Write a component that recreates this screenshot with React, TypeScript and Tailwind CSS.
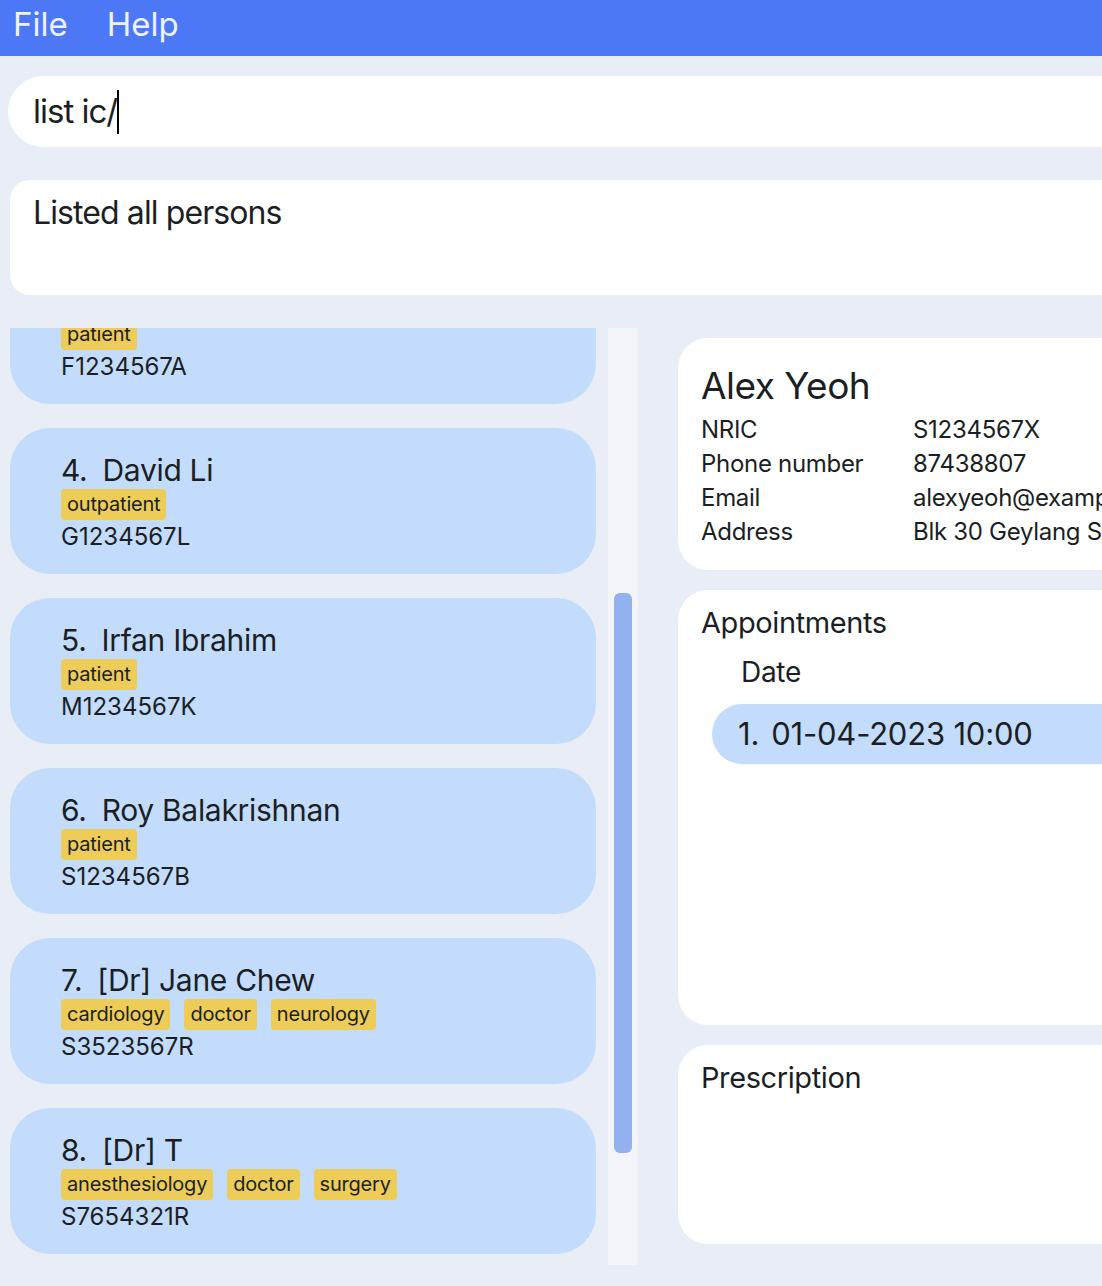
import React from "react";

const people = [
  { n: 1, name: "Alex Yeoh", tags: ["patient"], id: "S1234567X" },
  { n: 2, name: "Bernice Yu", tags: ["patient"], id: "T1234567B" },
  { n: 3, name: "Charlotte Oliveiro", tags: ["patient"], id: "F1234567A" },
  { n: 4, name: "David Li", tags: ["outpatient"], id: "G1234567L" },
  { n: 5, name: "Irfan Ibrahim", tags: ["patient"], id: "M1234567K" },
  { n: 6, name: "Roy Balakrishnan", tags: ["patient"], id: "S1234567B" },
  { n: 7, name: "[Dr] Jane Chew", tags: ["cardiology", "doctor", "neurology"], id: "S3523567R" },
  { n: 8, name: "[Dr] T", tags: ["anesthesiology", "doctor", "surgery"], id: "S7654321R" },
];

function Card({ p }: { p: (typeof people)[number] }) {
  return (
    <div className="h-[146px] shrink-0 rounded-[40px] bg-[#c3dcfc] pl-[51px] pt-[22px] text-[#1b1f24]">
      <div className="flex gap-[15px] text-[30px] leading-[40px] tracking-[-0.3px]">
        <span>{p.n}.</span>
        <span>{p.name}</span>
      </div>
      <div className="mt-[-1px] flex gap-[14px]">
        {p.tags.map((t) => (
          <span key={t} className="rounded-[4px] bg-[#edcc57] px-[6px] text-[20px] leading-[31px] tracking-[-0.2px]">
            {t}
          </span>
        ))}
      </div>
      <div className="mt-[2px] text-[24px] leading-[30px]">{p.id}</div>
    </div>
  );
}

export default function App() {
  return (
    <div
      className="relative h-[1286px] w-[1102px] overflow-hidden bg-[#e8edf6] text-[#1b1f24]"
      style={{ fontFamily: "Inter, 'Noto Sans', sans-serif" }}
    >
      <div className="flex h-[56px] items-start gap-[39px] bg-[#4d78f5] pl-[13px] pt-[2px] text-[33px] leading-[44px] text-[#eef2fd]">
        <span>File</span>
        <span>Help</span>
      </div>

      <div className="ml-[8px] mt-[20px] flex h-[71px] w-[1200px] items-center rounded-l-full bg-white pl-[25px] text-[33px] tracking-[-1px]">
        <span>list ic/</span>
        <span className="ml-[0px] inline-block h-[44px] w-[2px] bg-black" />
      </div>

      <div className="ml-[10px] mt-[33px] h-[115px] w-[1200px] rounded-l-[20px] bg-white pl-[23px] pt-[13px] text-[32px] leading-[40px] tracking-[-0.9px]">
        Listed all persons
      </div>

      <div className="mt-[33px] flex h-[937px]">
        <div className="ml-[10px] h-full w-[586px] shrink-0 overflow-hidden">
          <div className="mt-[-410px] flex flex-col gap-[24px]">
            {people.map((p) => (
              <Card key={p.n} p={p} />
            ))}
          </div>
        </div>
        <div className="ml-[12px] h-full w-[30px] shrink-0 bg-[#f3f5fa] px-[6px] pt-[265px]">
          <div className="h-[560px] rounded-[6px] bg-[#93b1ee]" />
        </div>
        <div className="ml-[40px] mt-[10px] flex w-[800px] shrink-0 flex-col gap-[20px]">
          <div className="h-[232px] rounded-l-[30px] bg-white pl-[23px] pt-[24px]">
            <div className="text-[37px] leading-[48px] tracking-[-0.5px]">Alex Yeoh</div>
            <div className="mt-[3px] grid grid-cols-[212px_1fr] text-[24px] leading-[34px] tracking-[-0.3px]">
              <span>NRIC</span>
              <span>S1234567X</span>
              <span>Phone number</span>
              <span>87438807</span>
              <span>Email</span>
              <span>alexyeoh@example.com</span>
              <span>Address</span>
              <span>Blk 30 Geylang Street 29, #06-40</span>
            </div>
          </div>
          <div className="h-[435px] rounded-l-[30px] bg-white pl-[23px] pt-[14px]">
            <div className="text-[29px] leading-[38px] tracking-[-0.4px]">Appointments</div>
            <div className="ml-[40px] mt-[11px] text-[28px] leading-[38px] tracking-[-0.3px]">Date</div>
            <div className="ml-[11px] mt-[13px] flex h-[60px] items-center rounded-l-full bg-[#c3dcfc] pl-[26px] text-[31px] tracking-[-0.2px]">
              <span>1.</span>
              <span className="ml-[12px]">01-04-2023 10:00</span>
            </div>
          </div>
          <div className="h-[199px] rounded-l-[30px] bg-white pl-[23px] pt-[14px]">
            <div className="text-[29px] leading-[38px] tracking-[-0.4px]">Prescription</div>
          </div>
        </div>
      </div>
    </div>
  );
}
